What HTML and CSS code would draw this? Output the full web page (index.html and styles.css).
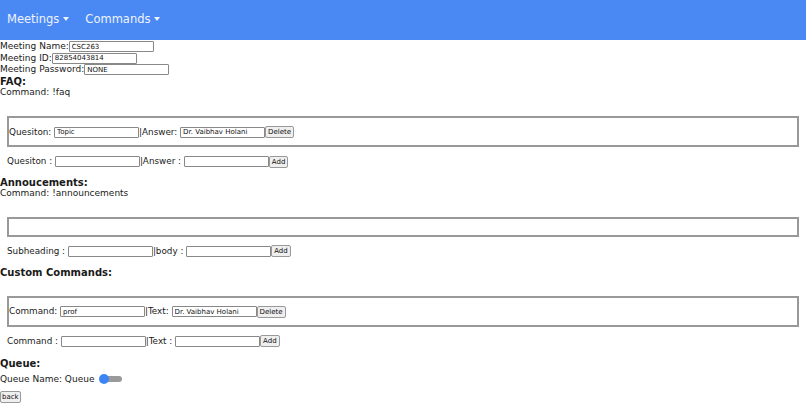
FILE: index.html
```html
<!DOCTYPE html>
<html>
<head>
<meta charset="utf-8">
<link rel="stylesheet" href="styles.css">
</head>
<body>
<nav class="nav">
  <span class="nav-item">Meetings <span class="caret"></span></span>
  <span class="nav-item">Commands <span class="caret"></span></span>
</nav>
<div class="info">
  <div class="line">Meeting Name:<input class="inp" value="CSC263"></div>
  <div class="line">Meeting ID:<input class="inp" value="82854043814"></div>
  <div class="line">Meeting Password:<input class="inp" value="NONE"></div>
</div>
<h3 class="heading">FAQ:</h3>
<div class="line">Command: !faq</div>
<div class="box">
  <div class="row">Quesiton: <input class="inp" value="Topic">|Answer: <input class="inp" value="Dr. Vaibhav Holani"><button class="btn">Delete</button></div>
</div>
<div class="row add-row">Quesiton : <input class="inp">|Answer : <input class="inp"><button class="btn">Add</button></div>
<h3 class="heading h-ann">Annoucements:</h3>
<div class="line">Command: !announcements</div>
<div class="box box-empty"></div>
<div class="row add-row">Subheading : <input class="inp">|body : <input class="inp"><button class="btn">Add</button></div>
<h3 class="heading h-cc">Custom Commands:</h3>
<div class="box box-cc">
  <div class="row">Command: <input class="inp" value="prof">|Text: <input class="inp" value="Dr. Vaibhav Holani"><button class="btn">Delete</button></div>
</div>
<div class="row add-row">Command : <input class="inp">|Text : <input class="inp"><button class="btn">Add</button></div>
<h3 class="heading h-q">Queue:</h3>
<div class="queue">Queue Name: Queue <span class="toggle"><span class="knob"></span></span></div>
<button class="btn back">back</button>
</body>
</html>
```
FILE: styles.css
```css
* { box-sizing: border-box; }
body {
  margin: 0;
  font-family: "DejaVu Sans", "Open Sans", sans-serif;
  font-size: 9px;
  color: #1a1a1a;
  background: #fff;
}
.nav {
  height: 40px;
  background: #4a89f3;
  display: flex;
  align-items: center;
  padding: 0 0 3px 7px;
  gap: 16px;
}
.nav-item {
  color: #eef3fe;
  font-size: 11.5px;
  display: flex;
  align-items: center;
  gap: 4px;
}
.caret {
  width: 0;
  height: 0;
  border-left: 3.5px solid transparent;
  border-right: 3.5px solid transparent;
  border-top: 4px solid #eef3fe;
}
.info { margin-top: 1px; }
.line {
  height: 11.5px;
  line-height: 11.5px;
  display: flex;
  align-items: center;
}
.inp {
  width: 85px;
  height: 11px;
  border: 1px solid #888;
  border-radius: 1px;
  padding: 0 2px;
  font-family: "DejaVu Sans", sans-serif;
  font-size: 7px;
  color: #111;
  margin: 0;
  vertical-align: middle;
}
.heading {
  font-size: 10px;
  font-weight: bold;
  margin: 0;
  height: 11px;
  line-height: 11px;
}
.box {
  margin: 18px 7px 0 7px;
  border: 2px solid #999;
  height: 31px;
  display: flex;
  align-items: center;
}
.row {
  display: block;
  height: 12px;
  line-height: 12px;
  white-space: nowrap;
  font-size: 8.8px;
}
.add-row { margin: 8px 0 0 7px; }
.btn {
  font-family: "DejaVu Sans", sans-serif;
  font-size: 7px;
  height: 12px;
  line-height: 10px;
  padding: 0 2px;
  border: 1px solid #999;
  border-radius: 2px;
  background: #efefef;
  color: #111;
  margin: 0;
  vertical-align: middle;
}
.h-ann { margin-top: 10px; }
.box-empty { height: 20px; margin-top: 17px; }
.h-cc { margin-top: 10px; }
.box-cc { margin-top: 18px; }
.h-q { margin-top: 11px; }
.queue {
  display: flex;
  align-items: center;
  margin-top: 4px;
  height: 12px;
  gap: 2px;
}
.toggle {
  position: relative;
  width: 22px;
  height: 6px;
  background: #9a9a9a;
  border-radius: 3px;
  margin-left: 4px;
}
.knob {
  position: absolute;
  left: -1px;
  top: -2px;
  width: 10px;
  height: 10px;
  border-radius: 50%;
  background: #3d85f5;
}
.back { display: block; margin-top: 6px; padding: 0 1px; }
```
